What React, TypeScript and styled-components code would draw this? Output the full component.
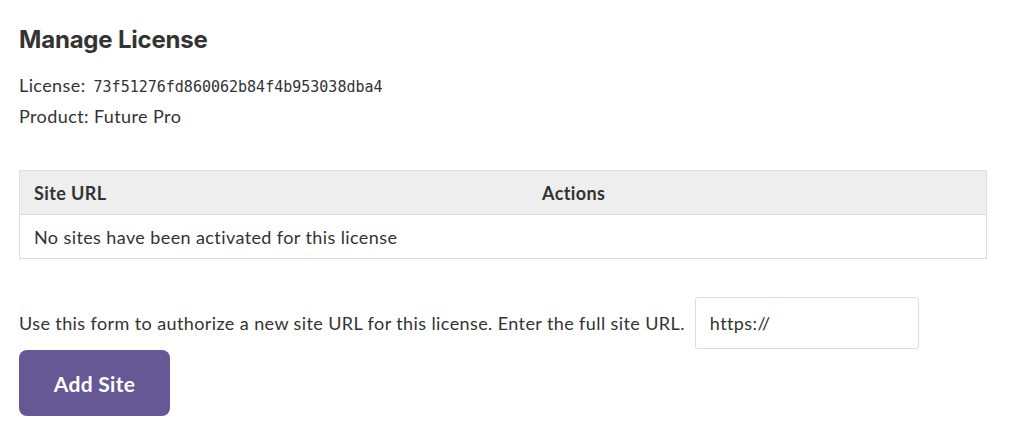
import styled, { createGlobalStyle } from "styled-components";

const GlobalStyle = createGlobalStyle`
    body {
        margin: 0;
        background: #ffffff;
        font-family: "Lato", "Liberation Sans", sans-serif;
        color: #333333;
    }
`;

const Page = styled.div`
    padding: 24px 19px 0;
    width: 968px;
    font-size: 18px;
    letter-spacing: 0.4px;
`;

const Title = styled.h2`
    margin: 0 0 18px;
    font-family: "Inter", "Liberation Sans", sans-serif;
    font-size: 24px;
    font-weight: 700;
    line-height: 32px;
    letter-spacing: -0.2px;
    color: #333333;
`;

const InfoLine = styled.p`
    margin: 0 0 9px;
    line-height: 22px;

    code {
        margin-left: 3px;
        font-family: "DejaVu Sans Mono", monospace;
        font-size: 15px;
        line-height: 1;
        letter-spacing: 0;
        color: #333333;
    }
`;

const Table = styled.table`
    margin-top: 43px;
    width: 100%;
    border-collapse: collapse;
    border: 1px solid #dddddd;

    th {
        background: #eeeeee;
        font-weight: 700;
        text-align: left;
        height: 43px;
        padding: 0 14px;
        border-bottom: 1px solid #dddddd;
    }

    td {
        height: 43px;
        padding: 0 14px;
    }
`;

const FormRow = styled.form`
    margin-top: 38px;
    display: flex;
    flex-direction: column;
    align-items: flex-start;
`;

const FieldLine = styled.label`
    display: flex;
    align-items: center;
    gap: 10px;
`;

const UrlInput = styled.input`
    width: 224px;
    height: 52px;
    box-sizing: border-box;
    border: 1px solid #dddddd;
    border-radius: 3px;
    padding: 0 14px;
    font-family: "Lato", "Liberation Sans", sans-serif;
    font-size: 18px;
    letter-spacing: 0.4px;
    color: #333333;
    outline: none;
`;

const AddButton = styled.button`
    margin-top: 1px;
    width: 151px;
    height: 66px;
    border: none;
    border-radius: 8px;
    background: #665795;
    color: #ffffff;
    font-family: "Lato", "Liberation Sans", sans-serif;
    font-size: 21px;
    font-weight: 700;
    letter-spacing: 0.3px;
    cursor: pointer;
`;

const App = () => {
    return (
        <Page>
            <GlobalStyle />
            <Title>Manage License</Title>
            <InfoLine>
                License: <code>73f51276fd860062b84f4b953038dba4</code>
            </InfoLine>
            <InfoLine>Product: Future Pro</InfoLine>
            <Table>
                <thead>
                    <tr>
                        <th style={{ width: "480px" }}>Site URL</th>
                        <th>Actions</th>
                    </tr>
                </thead>
                <tbody>
                    <tr>
                        <td colSpan={2}>No sites have been activated for this license</td>
                    </tr>
                </tbody>
            </Table>
            <FormRow onSubmit={(e) => e.preventDefault()}>
                <FieldLine>
                    Use this form to authorize a new site URL for this license. Enter the full site URL.
                    <UrlInput type="text" defaultValue="https://" />
                </FieldLine>
                <AddButton type="submit">Add Site</AddButton>
            </FormRow>
        </Page>
    );
};

export default App;
